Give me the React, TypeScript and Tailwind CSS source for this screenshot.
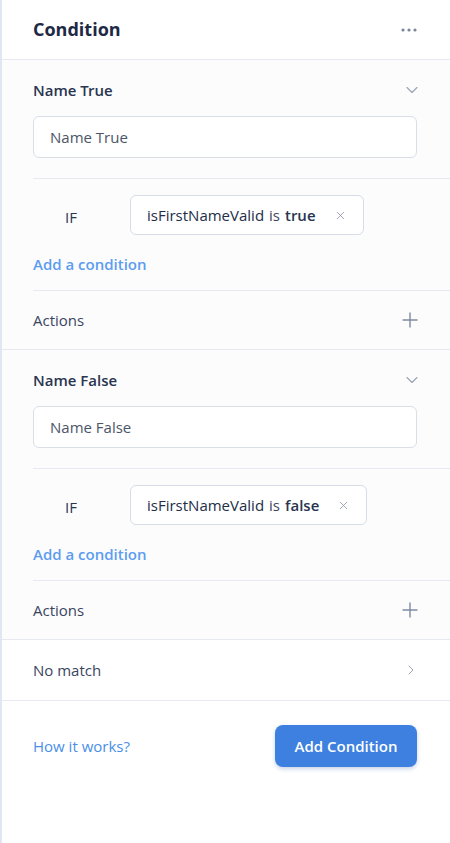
import { Plus, ChevronDown, ChevronRight, X } from 'lucide-react';

interface BranchProps {
  name: string;
  variable: string;
  value: string;
}

const semi = "font-['Open_Sans_SemiBold','Open_Sans',sans-serif] font-semibold";

function Dots() {
  return (
    <svg width="16" height="4" viewBox="0 0 16 4" className="text-[#7b8597]">
      <circle cx="2" cy="2" r="1.6" fill="currentColor" />
      <circle cx="8" cy="2" r="1.6" fill="currentColor" />
      <circle cx="14" cy="2" r="1.6" fill="currentColor" />
    </svg>
  );
}

function Branch({ name, variable, value }: BranchProps) {
  return (
    <section className="pl-[31px] bg-[#fcfcfd] border-b border-[#e6e9f0]">
      <div className="pr-[33px] pt-4 pb-5">
        <div className="h-7 flex items-center justify-between">
          <span className={`text-[15px] text-[#2a3550] ${semi}`}>{name}</span>
          <ChevronDown size={20} strokeWidth={1.4} className="text-[#9ba5b6] mr-[-5px]" />
        </div>
        <div className="mt-3 h-[42px] rounded-md border border-[#d9dee7] bg-white flex items-center px-4 text-[15px] text-[#4b5568]">
          {name}
        </div>
      </div>

      {/* condition list */}
      <div className="border-t border-[#e6e9f0] pr-[33px] pt-4 pb-4">
        <div className="flex items-center">
          <div className="w-[97px] pl-8 text-[15px] text-[#2a3550] pt-[4px]">IF</div>
          <div className="h-10 rounded-md border border-[#d6dce8] bg-white flex items-center pl-4 pr-4 text-[15px] text-[#2a3550]">
            <span className="text-[#222d48]">{variable}</span>
            <span className="ml-[5px] text-[#3a4560]">is</span>
            <span className={`ml-[5px] ${semi}`}>{value}</span>
            <X size={13} strokeWidth={1.5} className="ml-[18px] text-[#8d96a8]" />
          </div>
        </div>
        <div className={`mt-[19px] h-5 flex items-center text-[15px] text-[#5c9df0] ${semi}`}>
          Add a condition
        </div>
      </div>

      <div className="border-t border-[#e6e9f0] pr-[33px] h-[59px] flex items-center justify-between">
        <span className="text-[15px] text-[#3a4560]">Actions</span>
        <Plus size={24} strokeWidth={1.4} className="text-[#7d8ba0] mr-[-5px]" />
      </div>
    </section>
  );
}

export default function App() {
  return (
    <div
      className="w-[450px] h-[843px] bg-white border-l-2 border-[#e1e6f3] overflow-hidden"
      style={{ fontFamily: '"Open Sans", "Noto Sans", sans-serif' }}
    >
      <header className="h-[60px] border-b border-[#e6e9f0] pl-[31px] pr-[33px] flex items-center justify-between">
        <h1 className="text-[18px] font-bold text-[#1e2944]">Condition</h1>
        <Dots />
      </header>

      <Branch name="Name True" variable="isFirstNameValid" value="true" />
      <Branch name="Name False" variable="isFirstNameValid" value="false" />

      <div className="h-[61px] border-b border-[#e6e9f0] pl-[31px] pr-[33px] flex items-center justify-between">
        <span className="text-[15px] text-[#3a4560]">No match</span>
        <ChevronRight size={16} strokeWidth={1.5} className="text-[#9ba5b6] mr-[-2px]" />
      </div>

      <div className="pl-[31px] pr-[33px] pt-6 flex items-center justify-between">
        <a className="text-[15px] text-[#4a8fe8]">How it works?</a>
        <button className={`h-[42px] w-[142px] rounded-lg bg-[#3d80e0] text-white text-[15px] shadow-[0_2px_4px_rgba(40,80,160,0.25)] ${semi}`}>
          Add Condition
        </button>
      </div>
    </div>
  );
}
